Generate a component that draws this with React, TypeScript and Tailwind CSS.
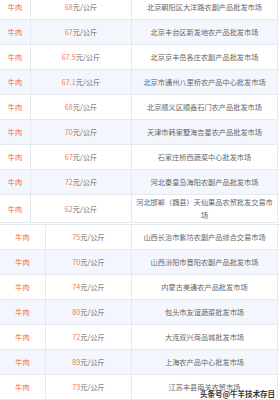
import React from "react";

type Row = { p: string; m: string; m2?: string };

const top: Row[] = [
  { p: "68", m: "北京朝阳区大洋路农副产品批发市场" },
  { p: "67", m: "北京丰台区新发地农产品批发市场" },
  { p: "67.5", m: "北京京丰岳各庄农副产品批发市场" },
  { p: "67.1", m: "北京市通州八里桥农产品中心批发市场" },
  { p: "68", m: "北京顺义区顺鑫石门农产品批发市场" },
  { p: "70", m: "天津市韩家墅海吉星农产品批发市场" },
  { p: "67", m: "石家庄桥西蔬菜中心批发市场" },
  { p: "72", m: "河北秦皇岛海阳农副产品批发市场" },
  { p: "62", m: "河北邯郸（魏县）天仙果品农贸批发交易市", m2: "场" },
];

const bottom: Row[] = [
  { p: "75", m: "山西长治市紫坊农副产品综合交易市场" },
  { p: "70", m: "山西汾阳市晋阳农副产品批发市场" },
  { p: "74", m: "内蒙古美通农产品批发市场" },
  { p: "80", m: "包头市友谊蔬菜批发市场" },
  { p: "72", m: "大连双兴商品城批发市场" },
  { p: "89", m: "上海农产品中心批发市场" },
  { p: "73", m: "江苏丰县南关农贸市场" },
];

function Table({ rows, c1, c2 }: { rows: Row[]; c1: string; c2: string }) {
  return (
    <div className="flex flex-col w-[278px] border-r border-[#e6e9ef]">
      {rows.map((r, i) => (
        <div
          key={i}
          className={`flex min-h-[25px] border-b border-[#e6e9ef] ${i % 2 === 1 ? "bg-[#f3f7fd]" : "bg-white"}`}
        >
          <div className={`${c1} shrink-0 flex items-center justify-center border-r border-[#e6e9ef] text-[#f4663f]`}>
            牛肉
          </div>
          <div className={`${c2} shrink-0 flex items-center justify-center border-r border-[#e6e9ef] text-[#666]`}>
            <span className="text-[#f27a58]">{r.p}</span>元/公斤
          </div>
          <div className="flex-1 min-w-0 flex flex-col items-center justify-center text-center px-[1px] py-[1px] text-[#666] leading-[12.5px] whitespace-nowrap">
            <span>{r.m}</span>
            {r.m2 && <span>{r.m2}</span>}
          </div>
        </div>
      ))}
    </div>
  );
}

export default function App() {
  return (
    <div
      className="relative w-[280px] h-[400px] overflow-hidden bg-white text-[7.2px] leading-[12px]"
      style={{ fontFamily: '"Noto Sans CJK SC", "Noto Sans", sans-serif' }}
    >
      <div className="-mt-[5px]">
        <Table rows={top} c1="w-[31px]" c2="w-[101px]" />
      </div>
      <div className="h-[1px]" />
      <div className="border-t border-[#e6e9ef]">
        <Table rows={bottom} c1="w-[46px]" c2="w-[86px]" />
      </div>
      <div className="absolute right-[5px] bottom-[2px] text-[7.5px] font-bold text-[#333] leading-[8px]">
        头条号@牛羊技术存目
      </div>
    </div>
  );
}
